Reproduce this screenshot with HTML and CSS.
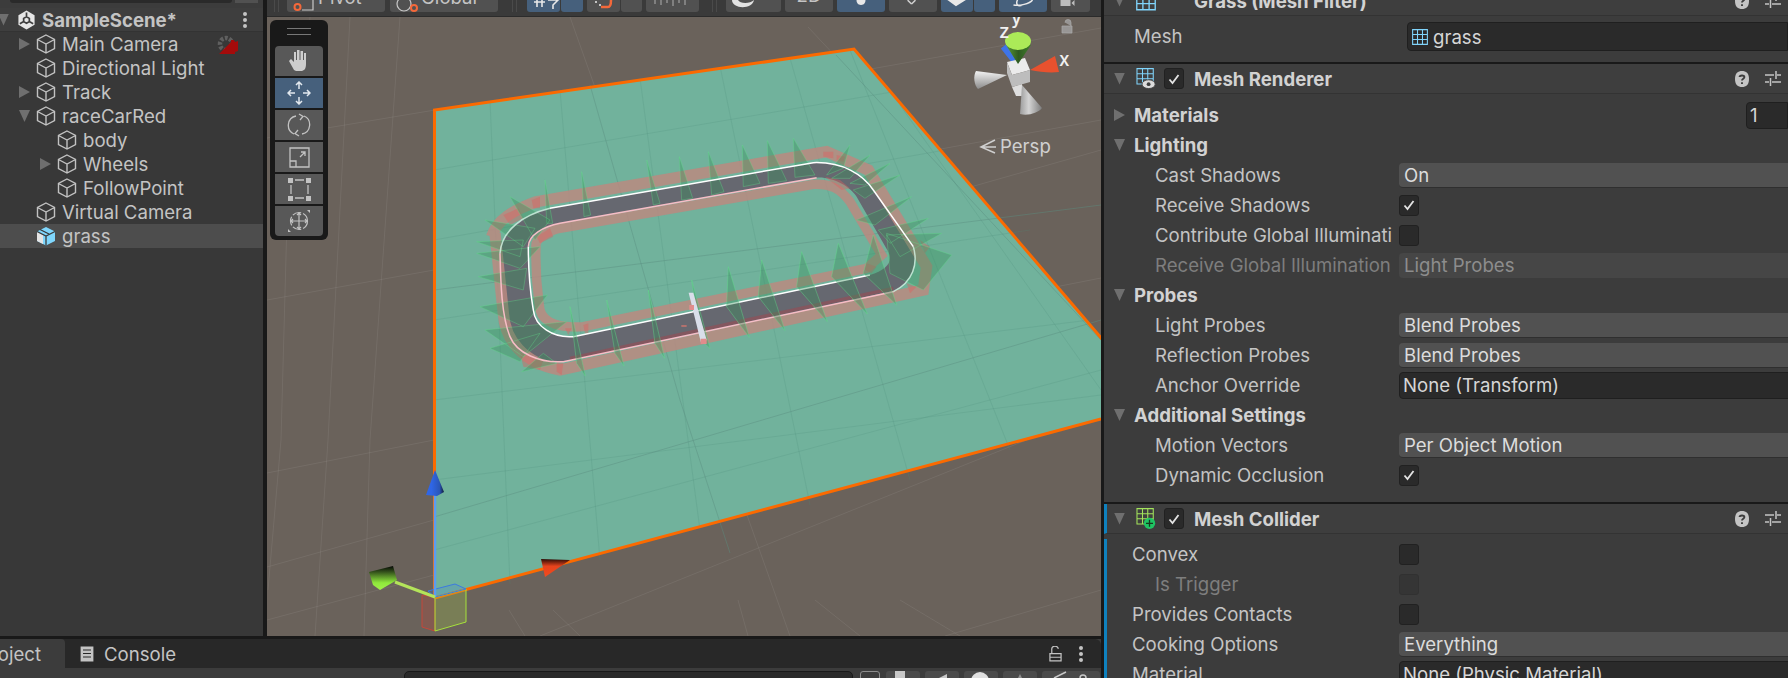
FILE: index.html
```html
<!DOCTYPE html>
<html lang="en">

<head>
    <meta charset="UTF-8">
    <title>SampleScene - Unity</title>
    <link rel="stylesheet" href="styles.css">
</head>

<body>
    <svg class="defs" width="0" height="0">
        <symbol id="cube" viewBox="0 0 20 20">
            <path d="M10 1 18.5 5.5V14.5L10 19 1.5 14.5V5.5ZM1.5 5.5 10 10 18.5 5.5M10 10V19" fill="none" stroke="#c2c2c2" stroke-width="1.4" />
        </symbol>
        <symbol id="prefab" viewBox="0 0 20 20">
            <path d="M10 1 19 5.5V15L10 19.5 1 15V5.5Z" fill="#7fd6fc" />
            <path d="M1 6 7 9V18L1 15Z" fill="#e4e4e4" />
            <path d="M10 10V19.5M4 3.5 13 8M1 5.5 10 10 19 5.5" fill="none" stroke="#3a3a3a" stroke-width="1.3" />
        </symbol>
        <symbol id="help" viewBox="0 0 14 16">
            <path d="M7 0C11 0 14 2 14 8S11 16 7 16 0 14 0 8 3 0 7 0Z" fill="#c4c4c4" />
            <path d="M4.6 6C4.6 4.2 9.4 3.8 9.4 6 9.4 7.8 7 7.6 7 9.6M7 11.2V13" fill="none" stroke="#3c3c3c" stroke-width="1.9" />
        </symbol>
        <symbol id="sliders" viewBox="0 0 16 18">
            <path d="M0 5H9M12 5H16M11 1V9M0 12H4M7 12H16M5.5 8V16" fill="none" stroke="#c4c4c4" stroke-width="1.5" />
        </symbol>
        <symbol id="meshgrid" viewBox="0 0 18 18">
            <path d="M.7.7H17.3V17.3H.7ZM6.2.7V17.3M11.8.7V17.3M.7 6.2H17.3M.7 11.8H17.3" fill="none" stroke="#80d4fb" stroke-width="1.2" />
        </symbol>
        <symbol id="check" viewBox="0 0 12 12">
            <path d="M1.5 6.5 4.5 10 10.5 2" fill="none" stroke="#e4e4e4" stroke-width="1.8" />
        </symbol>
    </svg>

    <div class="editor">
        <div class="workspace">
            <div class="top-area">
                <!-- hierarchy -->
                <div class="hierarchy">
                    <div class="search-strip">
                        <div class="search-field"></div>
                        <div class="search-btn"></div>
                    </div>
                    <div class="scene-row">
                        <span class="tri tri-down tri-clip"></span>
                        <svg class="unity-logo" viewBox="0 0 20 20">
                            <path d="M10 0 18.5 5V15L10 20 1.5 15V5Z" fill="#e6e6e6" />
                            <path d="M10 6.5 7 8.300V11.700L10 13.500 13 11.700V8.300ZM10 2V6.500M3 14 7 11.700M17 14 13 11.700" fill="none" stroke="#3e3e3e" stroke-width="1.800" />
                        </svg>
                        <span class="scene-name">SampleScene*</span>
                        <span class="kebab"></span>
                    </div>
                    <div class="node"><span class="tri tri-right"></span><svg class="node-icon"><use href="#cube" /></svg><span>Main Camera</span>
                        <svg class="cam-warning" viewBox="0 0 22 20">
                            <circle cx="9" cy="10" r="6" fill="none" stroke="#606060" stroke-width="4.500" stroke-dasharray="2.800 1.600" />
                            <path d="M2 20 14 8V6H17L18 8 21 7V17L18 18V20Z" fill="#a40b0b" />
                        </svg>
                    </div>
                    <div class="node"><span class="tri"></span><svg class="node-icon"><use href="#cube" /></svg><span>Directional Light</span></div>
                    <div class="node"><span class="tri tri-right"></span><svg class="node-icon"><use href="#cube" /></svg><span>Track</span></div>
                    <div class="node"><span class="tri tri-down"></span><svg class="node-icon"><use href="#cube" /></svg><span>raceCarRed</span></div>
                    <div class="node child"><span class="tri"></span><svg class="node-icon"><use href="#cube" /></svg><span>body</span></div>
                    <div class="node child"><span class="tri tri-right"></span><svg class="node-icon"><use href="#cube" /></svg><span>Wheels</span></div>
                    <div class="node child"><span class="tri"></span><svg class="node-icon"><use href="#cube" /></svg><span>FollowPoint</span></div>
                    <div class="node"><span class="tri"></span><svg class="node-icon"><use href="#cube" /></svg><span>Virtual Camera</span></div>
                    <div class="node selected"><span class="tri"></span><svg class="node-icon"><use href="#prefab" /></svg><span>grass</span></div>
                </div>

                <!-- scene view -->
                <div class="scene">
                    <div class="scene-toolbar">
                        <span class="grip-mark"></span>
                        <div class="tb-btn w-pivot">
                            <svg class="tb-icon pivot-icon" viewBox="0 0 22 24"><circle cx="4.500" cy="19" r="3" fill="none" stroke="#f4683a" stroke-width="2" /><path d="M9 22H20V12" fill="none" stroke="#c8c8c8" stroke-width="1.200" /></svg>
                            Pivot
                        </div>
                        <div class="tb-btn w-global">
                            <svg class="tb-icon global-icon" viewBox="0 0 24 24"><circle cx="8" cy="16" r="7" fill="none" stroke="#c8c8c8" stroke-width="1.200" /><circle cx="18" cy="20" r="3" fill="none" stroke="#f4683a" stroke-width="2" /></svg>
                            Global
                        </div>
                        <span class="grip-mark second"></span>
                        <div class="tb-btn blue w-snap"><svg class="tb-glyph" viewBox="0 0 33 12"><path d="M10 0V7M15 0V7M7 2H18M21 0H31L26 5V9" fill="none" stroke="#e8e8e8" stroke-width="1.600" /></svg></div>
                        <div class="tb-btn blue w-snap2 joined"></div>
                        <div class="tb-btn w-snap ml"><svg class="tb-glyph" viewBox="0 0 33 12"><path d="M8 2H10M12 5H14" stroke="#e8e8e8" stroke-width="1.600" /><path d="M14 7H21C23 7 24 5 24 0" fill="none" stroke="#f4683a" stroke-width="2.500" /></svg></div>
                        <div class="tb-btn w-small joined"></div>
                        <div class="tb-btn w-ruler ml"><svg class="tb-glyph" viewBox="0 0 53 12"><path d="M9 0V4M15 0V5M21 0V3M27 0V6M33 0V3M39 0V5" stroke="#b0b0b0" /></svg></div>
                        <span class="grip-mark third"></span>
                        <div class="tb-btn w-shade"><svg class="tb-glyph" viewBox="0 0 55 12"><path d="M6 0C6 9 26 10 28 0 24 4 14 4 12 0Z" fill="#e2e2e2" /></svg></div>
                        <div class="tb-btn w-2d ml label-short">2D</div>
                        <div class="tb-btn blue w-light ml"><svg class="tb-glyph" viewBox="0 0 47 12"><path d="M19 0H28C28 2 27 5 23.500 5 20 5 19 2 19 0Z" fill="#e8e8e8" /></svg></div>
                        <div class="tb-btn w-audio ml"><svg class="tb-glyph" viewBox="0 0 49 12"><path d="M19 0 23 4M27 0 23 4" stroke="#cfcfcf" stroke-width="1.500" /></svg></div>
                        <div class="tb-btn blue w-fx ml"><svg class="tb-glyph" viewBox="0 0 32 12"><path d="M8 0 15 5 23 0Z" fill="#e8e8e8" stroke="#e8e8e8" stroke-width="2" /></svg></div>
                        <div class="tb-btn blue w-small joined"></div>
                        <div class="tb-btn blue w-light ml"><svg class="tb-glyph" viewBox="0 0 47 12"><path d="M14 5C20 6 30 4 33 0M18 0C16 4 18 7 23 5" fill="none" stroke="#e8e8e8" stroke-width="1.500" /></svg></div>
                        <div class="tb-btn w-cam ml"><svg class="tb-glyph" viewBox="0 0 38 12"><path d="M9 0H19V6H9ZM20 3 23 0V6Z" fill="#bdbdbd" /></svg></div>
                    </div>

                    <svg class="viewport" viewBox="267 17 834 619">
                        <defs>
                            <linearGradient id="cone-blue" x1="0" x2="1" y1="0" y2="0"><stop offset=".3" stop-color="#2f66e6" /><stop offset=".75" stop-color="#2a56b8" /><stop offset="1" stop-color="#101c3a" /></linearGradient>
                            <linearGradient id="cone-green" x1="0" x2="0" y1="0" y2="1"><stop offset="0" stop-color="#050805" /><stop offset=".25" stop-color="#34521c" /><stop offset=".7" stop-color="#8fe83c" /><stop offset="1" stop-color="#a2f04a" /></linearGradient>
                            <linearGradient id="cone-red" x1="0" x2="0" y1="0" y2="1"><stop offset="0" stop-color="#2a0c06" /><stop offset=".4" stop-color="#e8431c" /><stop offset="1" stop-color="#ef4b1f" /></linearGradient>
                            <linearGradient id="cone-green-dark" x1="0" x2="1" y1="0" y2="0"><stop offset="0" stop-color="#5a9a35" /><stop offset=".5" stop-color="#2f5a22" /><stop offset="1" stop-color="#3f7f2b" /></linearGradient>
                            <linearGradient id="cone-grey" x1="0" x2="0" y1="0" y2="1"><stop offset="0" stop-color="#f2f2f2" /><stop offset="1" stop-color="#8b8b8b" /></linearGradient>
                            <linearGradient id="cone-grey2" x1="0" x2="1" y1="0" y2="0"><stop offset="0" stop-color="#9d9d9d" /><stop offset=".4" stop-color="#d4d4d4" /><stop offset="1" stop-color="#7c7c7c" /></linearGradient>
                        </defs>
                        <rect x="267" y="17" width="834" height="619" fill="#6a625b" />
                        <g stroke="#ffffff" stroke-opacity=".07" fill="none">
                            <path d="M570 17 790 636M808 27 1101 340M267 138 435 110M854 72 1101 28M1101 150 960 190" />
                            <path d="M281 440 268 590M328 440 315 636M370 440 364 636M509 610 525 636M553 610 580 636M738 600 748 636M815 600 860 636M900 600 960 636" />
                            <path d="M267 473 434 440M267 567 434 520M267 620 434 575M540 636 1101 410M945 636 1101 590M880 160 1101 120" />
                            <path d="M310 17 300 110M267 300 434 270M290 110 281 440M350 17 328 440M400 17 370 440M1040 290 1101 278" />
                        </g>
                        <polygon points="434.500,110 854,49 1101,338 1101,419 434.500,598" fill="#71b29c" />
                        <g stroke="#4f8d7a" stroke-opacity=".22" fill="none">
                            <path d="M434 170 892 92M434 240 945 150M434 320 1030 230M434 400 1090 320M434 480 1101 395M434 550 1101 370" />
                            <path d="M490 100 510 584M560 90 600 560M640 78 700 530M720 66 810 505M790 58 910 480M850 50 1010 450M900 105 1101 390" />
                        </g>
                        <path d="M590 85 680 400 730 553M836 55 1101 340M434 290 1101 205M434 517 1101 320" stroke="#5a8d80" stroke-opacity=".45" fill="none" />

                        <!-- track, drawn in its own zoomed coordinates -->
                        <g transform="translate(460 140) scale(.3333)">
                            <path fill="#666870" fill-rule="evenodd" d="M120 340C125 270 190 225 270 205L1060 68C1150 65 1210 105 1240 150L1360 320C1375 370 1360 425 1300 455L310 665C240 670 170 640 150 590 130 530 125 430 120 340ZM205 320C205 430 215 480 220 510 225 560 280 595 340 590L1230 405C1280 390 1300 365 1285 335L1190 170C1170 140 1120 110 1070 113L300 250C250 260 205 285 205 320Z" />
                            <path fill="none" stroke="#ba8a80" stroke-opacity=".85" stroke-width="34" d="M105 280 130 520C135 600 190 670 300 690L1390 450 1400 380 1225 90 1100 35 230 185C160 210 110 240 95 290" />
                            <path fill="none" stroke="#ba8a80" stroke-opacity=".85" stroke-width="28" d="M228 320C225 420 235 470 240 510 250 550 300 565 370 560L1220 385 1265 345 1170 185C1140 145 1110 130 1060 133L300 265C260 275 225 295 228 320Z" />
                            <path fill="none" stroke="#a9434b" stroke-opacity=".45" stroke-width="10" d="M330 655 1300 445" />
                            <g fill="#e25c5c" fill-opacity=".4">
                                <path d="M130 225 175 205 190 235 150 255ZM215 180 240 170 240 205 220 205ZM230 290 270 265 280 290 240 310ZM1090 35 1120 35 1120 55 1090 50ZM1130 45 1155 50 1150 65 1130 60ZM1095 110 1140 120 1170 145 1145 150ZM1220 370 1250 380 1235 400 1215 390ZM1380 300 1410 320 1395 340ZM1340 430 1370 440 1350 460ZM180 640 250 660 240 690 190 680ZM290 665 310 670 305 705 290 695ZM370 555 385 550 385 580 375 580ZM315 565 335 565 325 585Z" />
                            </g>
                            <g fill="#38915b" fill-opacity=".38" stroke="#62e08a" stroke-opacity=".5" stroke-width="2">
                                <path d="M255 120 278 250 260 250ZM365 95 392 225 372 230ZM560 60 600 190 580 195ZM658 50 698 175 665 180ZM745 35 792 155 755 165ZM847 15 900 130 850 140ZM922 2 980 122 925 130ZM1000 -5 1065 105 1005 112Z" />
                                <path d="M150 170 270 240 225 300ZM75 240 225 265 190 320ZM50 305 190 300 180 350ZM50 340 240 320 180 385ZM55 410 200 385 190 450ZM60 500 262 465 190 560ZM75 570 320 545 190 650ZM90 625 240 580 180 665ZM185 695 250 640 290 670Z" />
                                <path d="M1170 15 1100 105 1150 85ZM1230 45 1115 115 1170 115ZM1290 70 1170 130 1215 135ZM1320 105 1180 150 1215 175ZM1355 170 1190 240 1245 255ZM1405 235 1255 270 1290 310ZM1445 280 1280 285 1320 350ZM1475 345 1280 280 1290 400 1390 450Z" />
                            </g>
                            <path fill="none" stroke="#ffffff" stroke-width="4.500" d="M270 205 1060 68C1150 65 1210 105 1240 150L1360 320" />
                            <path fill="none" stroke="#f7bdc6" stroke-width="4.500" d="M120 340C122 430 125 530 150 590 170 640 240 670 310 665L1300 455" />
                            <path fill="none" stroke="#d6f5e6" stroke-opacity=".8" stroke-width="4.500" d="M1360 320C1375 370 1360 425 1300 455M120 340C125 270 190 225 270 205" />
                            <path fill="none" stroke="#f7bdc6" stroke-width="4.500" d="M1070 113 300 250C250 260 205 285 205 320" />
                            <path fill="none" stroke="#ffffff" stroke-width="4.500" d="M205 320C205 430 215 480 220 510 225 560 280 595 340 590L1230 405" />
                            <g fill="#38915b" fill-opacity=".38" stroke="#62e08a" stroke-opacity=".6" stroke-width="2">
                                <path d="M330 500 376 708 350 670ZM440 480 492 678 465 640ZM565 450 614 655 585 610ZM695 420 750 625 722 600ZM805 380 868 592 800 500ZM905 360 975 572 895 470ZM1025 335 1102 545 1010 440ZM1135 310 1222 522 1115 410ZM1240 285 1310 495 1210 400Z" />
                            </g>
                            <path d="M686 458 700 458 740 600 724 612Z" fill="#d9deea" />
                            <path d="M688 495 702 495 702 510 688 510ZM722 596 740 596 740 612 722 612Z" fill="#e18c8c" />
                            <path d="M664 556 680 556 680 560 664 560Z" fill="#d8776f" />
                        </g>

                        <!-- selection outline -->
                        <path d="M434.500 598V110L854 49 1102 339M434.500 598 1101 419" fill="none" stroke="#fb6a00" stroke-width="3" />

                        <!-- move handles -->
                        <path d="M435 597 422 595V627L435 631Z" fill="#c5473a" fill-opacity=".28" stroke="#c5473a" />
                        <path d="M435 597 466 589V622L435 631Z" fill="#a3c94a" fill-opacity=".28" stroke="#a6e23b" />
                        <path d="M435 597 428 591 455 584 466 589Z" fill="#3c7ae0" fill-opacity=".2" stroke="#3c7ae0" />
                        <path d="M435 494V597" stroke="#5b9cf2" stroke-width="2.500" />
                        <path d="M395 582 435 597" stroke="#b4e45a" stroke-width="3" />
                        <path d="M435 470 444 492 437 496 426 495Z" fill="url(#cone-blue)" />
                        <path d="M369 572 393 566 397 580 380 590 373 585Z" fill="url(#cone-green)" />
                        <path d="M570 560 541 559 545 577Z" fill="url(#cone-red)" />

                        <!-- orientation gizmo -->
                        <g>
                            <path d="M1007 75 976 71C973 76 974 85 978 89Z" fill="url(#cone-grey)" />
                            <path d="M1012 87 1022 84 1022 96 1016 96Z" fill="#dedede" />
                            <path d="M1022 85 1020 114C1028 116 1038 113 1042 108Z" fill="url(#cone-grey2)" />
                            <path d="M1004 46 1015 60" stroke="#3e74e8" stroke-width="8" />
                            <path d="M1007 62 1025 58 1030 70 1012 75Z" fill="#ebebeb" />
                            <path d="M1007 62 1012 75 1030 70V82L1012 87 1007 73Z" fill="#bdbdbd" />
                            <path d="M1030 70 1055 56 1059 72C1050 73 1040 72 1030 70Z" fill="#e8512e" />
                            <path d="M1006 45 1031 45 1018 64Z" fill="url(#cone-green-dark)" />
                            <ellipse cx="1018" cy="41" rx="13" ry="9" fill="#abea58" />
                            <text class="gizmo-label" x="1011" y="24">y</text>
                            <text class="gizmo-label" x="999" y="38">z</text>
                            <text class="gizmo-label" x="1059" y="66">x</text>
                            <path d="M1071 26V22.500A3 3 0 0 0 1065 22.500M1062 26H1072V33H1062Z" fill="#a8a8a8" fill-opacity=".75" stroke="#a8a8a8" stroke-opacity=".75" />
                            <path d="M995 140 981 147 995 153M981 147H996" fill="none" stroke="#cfcfcf" stroke-width="1.500" />
                            <text class="persp-label" x="1000" y="153">Persp</text>
                        </g>
                    </svg>

                    <!-- tool palette -->
                    <div class="palette">
                        <div class="grip"></div>
                        <div class="tool"><svg viewBox="0 0 24 24"><path d="M7 21 2 12 4 10 7 13V3H9V11H10V1H12.500V11H13.500V2H16V11H17V4H19V15C19 20 17 22 14 22H9Z" fill="#cdcdcd" /></svg></div>
                        <div class="tool active"><svg viewBox="0 0 24 24"><path d="M12 1V8M12 16V23M1 12H8M16 12H23M9 4 12 1 15 4M9 20 12 23 15 20M4 9 1 12 4 15M20 9 23 12 20 15" fill="none" stroke="#e2e8ee" stroke-width="1.500" /></svg></div>
                        <div class="tool"><svg viewBox="0 0 24 24"><path d="M7 21A9.500 9.500 0 0 1 9 3M17 3A9.500 9.500 0 0 1 15 21M12 1 16 3.500 13 7M12 23 8 20.500 11 17" fill="none" stroke="#c2c2c2" stroke-width="1.300" /></svg></div>
                        <div class="tool"><svg viewBox="0 0 24 24"><path d="M3 16V3H22V22H9V16H3V22H9M13 12 18 7M14 7H18V11" fill="none" stroke="#c2c2c2" stroke-width="1.300" /></svg></div>
                        <div class="tool"><svg viewBox="0 0 24 24"><path d="M8 3H17M8 21H17M4 8V17M21 8V17" fill="none" stroke="#c2c2c2" stroke-width="1.300" /><path d="M1 1H6V6H1ZM19 1H24V6H19ZM1 19H6V24H1ZM19 19H24V24H19Z" fill="#c2c2c2" /></svg></div>
                        <div class="tool"><svg viewBox="0 0 24 24"><circle cx="12" cy="12" r="8.500" fill="none" stroke="#c2c2c2" stroke-width="1.200" stroke-dasharray="9 2" /><path d="M12 4V20M4 12H20M10 6 12 4 14 6M10 18 12 20 14 18M6 10 4 12 6 14M18 10 20 12 18 14" fill="none" stroke="#c2c2c2" stroke-width="1.200" /><path d="M20 1H23V4ZM1 20 4 23H1Z" fill="#c2c2c2" /></svg></div>
                    </div>
                </div>
            </div>

            <!-- project / console -->
            <div class="bottom-panel">
                <div class="tabs">
                    <div class="tab active"><span class="tab-clip">Project</span></div>
                    <div class="tab">
                        <svg class="tab-icon" viewBox="0 0 14 16"><path d="M0 0H14V16H0ZM3 4H11M3 7.500H11M3 11H11" fill="#c4c4c4" stroke="#282828" stroke-width="1.200" /></svg>
                        Console
                    </div>
                    <div class="tab-spacer"></div>
                    <svg class="lock" viewBox="0 0 14 17"><path d="M3 8V4A3.500 3.500 0 0 1 10 3M1 8H13V16H1ZM1 12H13" fill="none" stroke="#c4c4c4" stroke-width="1.300" /></svg>
                    <span class="kebab small"></span>
                </div>
                <div class="project-bar">
                    <div class="project-search"></div>
                    <div class="pb-box"></div>
                    <div class="pb-btn w34"><svg viewBox="0 0 34 7"><path d="M9 0H19V7H9Z" fill="#c8c8c8" /></svg></div>
                    <div class="pb-btn w34"><svg viewBox="0 0 34 7"><path d="M14 7 22 3V7Z" fill="#c8c8c8" /></svg></div>
                    <div class="pb-btn w34"><svg viewBox="0 0 34 7"><circle cx="16" cy="10" r="9" fill="#e0e0e0" /></svg></div>
                    <div class="pb-btn w34"><svg viewBox="0 0 34 7"><path d="M17 3 19 7H15Z" fill="#909090" /></svg></div>
                    <div class="pb-btn wide"><svg viewBox="0 0 58 7"><path d="M12 7 24 1M38 7C38 3 44 3 44 7" fill="none" stroke="#c8c8c8" stroke-width="1.500" /></svg></div>
                </div>
            </div>
        </div>

        <!-- inspector -->
        <div class="inspector">
            <div class="comp-header first">
                <span class="tri tri-down"></span>
                <svg class="comp-icon"><use href="#meshgrid" /></svg>
                <span class="comp-title no-check">Grass (Mesh Filter)</span>
                <svg class="hdr-help"><use href="#help" /></svg>
                <svg class="hdr-sliders"><use href="#sliders" /></svg>
            </div>
            <div class="mesh-row">
                <span class="prop-label top">Mesh</span>
                <div class="object-field mesh-field"><svg class="field-icon"><use href="#meshgrid" /></svg>grass</div>
            </div>

            <div class="separator"></div>
            <div class="comp-header">
                <span class="tri tri-down"></span>
                <svg class="comp-icon" viewBox="0 0 22 24">
                    <path d="M.7.7H19.300V18.300H.7ZM7 .7V18.300M13 .7V18.300M.7 6.500H19.300M.7 12.300H19.300" fill="none" stroke="#80d4fb" stroke-width="1.200" />
                    <ellipse cx="14" cy="18.500" rx="7.500" ry="5" fill="#dcdcdc" stroke="#3e3e3e" />
                    <circle cx="14" cy="18.500" r="2.200" fill="#3e3e3e" />
                </svg>
                <span class="checkbox"><svg><use href="#check" /></svg></span>
                <span class="comp-title">Mesh Renderer</span>
                <svg class="hdr-help"><use href="#help" /></svg>
                <svg class="hdr-sliders"><use href="#sliders" /></svg>
            </div>
            <div class="comp-body">
                <div class="row"><span class="tri tri-right section-tri"></span><span class="prop-label top bold">Materials</span><div class="object-field count-field">1</div></div>
                <div class="row"><span class="tri tri-down section-tri"></span><span class="prop-label top bold">Lighting</span></div>
                <div class="row"><span class="prop-label sub">Cast Shadows</span><div class="dropdown">On</div></div>
                <div class="row"><span class="prop-label sub">Receive Shadows</span><span class="checkbox"><svg><use href="#check" /></svg></span></div>
                <div class="row"><span class="prop-label sub">Contribute Global Illuminati</span><span class="checkbox"></span></div>
                <div class="row"><span class="prop-label sub disabled">Receive Global Illumination</span><div class="dropdown off">Light Probes</div></div>
                <div class="row"><span class="tri tri-down section-tri"></span><span class="prop-label top bold">Probes</span></div>
                <div class="row"><span class="prop-label sub">Light Probes</span><div class="dropdown">Blend Probes</div></div>
                <div class="row"><span class="prop-label sub">Reflection Probes</span><div class="dropdown">Blend Probes</div></div>
                <div class="row"><span class="prop-label sub">Anchor Override</span><div class="object-field">None (Transform)</div></div>
                <div class="row"><span class="tri tri-down section-tri"></span><span class="prop-label top bold">Additional Settings</span></div>
                <div class="row"><span class="prop-label sub">Motion Vectors</span><div class="dropdown">Per Object Motion</div></div>
                <div class="row"><span class="prop-label sub">Dynamic Occlusion</span><span class="checkbox"><svg><use href="#check" /></svg></span></div>
            </div>

            <div class="separator"></div>
            <div class="comp-header changed">
                <span class="tri tri-down"></span>
                <svg class="comp-icon" viewBox="0 0 22 24">
                    <path d="M.7.7H19.300V18.300H.7ZM7 .7V18.300M13 .7V18.300M.7 6.500H19.300M.7 12.300H19.300" fill="none" stroke="#a3e45c" stroke-width="1.200" />
                    <circle cx="15" cy="17.500" r="6.500" fill="#1fc463" />
                    <path d="M15 13.500V21.500M11 17.500H19" stroke="#17391f" stroke-width="1.500" />
                </svg>
                <span class="checkbox"><svg><use href="#check" /></svg></span>
                <span class="comp-title">Mesh Collider</span>
                <svg class="hdr-help"><use href="#help" /></svg>
                <svg class="hdr-sliders"><use href="#sliders" /></svg>
            </div>
            <div class="comp-body changed">
                <div class="row"><span class="prop-label coll">Convex</span><span class="checkbox"></span></div>
                <div class="row"><span class="prop-label sub-coll disabled">Is Trigger</span><span class="checkbox off"></span></div>
                <div class="row"><span class="prop-label coll">Provides Contacts</span><span class="checkbox"></span></div>
                <div class="row"><span class="prop-label coll">Cooking Options</span><div class="dropdown">Everything</div></div>
                <div class="row"><span class="prop-label coll">Material</span><div class="object-field">None (Physic Material)</div></div>
            </div>
        </div>
    </div>
</body>

</html>
```

FILE: styles.css
```css
* {
    box-sizing: border-box;
}

html,
body {
    margin: 0;
    height: 100%;
    overflow: hidden;
}

body {
    font-family: Inter, "Noto Sans", sans-serif;
    font-size: 18.6px;
    color: #c4c4c4;
    background: #191919;
}

.defs {
    position: absolute;
}

.editor {
    display: flex;
    width: 1788px;
    height: 678px;
}

.workspace {
    width: 1101px;
    display: flex;
    flex-direction: column;
    flex: none;
}

.top-area {
    display: flex;
    height: 636px;
    flex: none;
}

/* hierarchy */
.hierarchy {
    width: 263px;
    flex: none;
    background: #383838;
}

.search-strip {
    display: flex;
    gap: 3px;
    height: 8px;
    padding-left: 10px;
    background: #3c3c3c;
}

.search-field {
    width: 222px;
    height: 3px;
    background: #2a2a2a;
    border-radius: 0 0 4px 4px;
}

.search-btn {
    width: 23px;
    height: 3px;
    background: #515151;
}

.scene-row {
    display: flex;
    align-items: center;
    height: 24px;
    background: #3e3e3e;
    border-bottom: 1px solid #333;
    font-weight: 700;
}

.scene-name {
    margin-left: 6px;
}

.unity-logo {
    width: 19px;
    height: 20px;
    margin-left: 8px;
}

.node {
    display: flex;
    align-items: center;
    height: 24px;
    padding-left: 19px;
    position: relative;
}

.node.child {
    padding-left: 40px;
}

.node.selected {
    background: #4d4d4d;
}

.node-icon {
    width: 20px;
    height: 20px;
    margin: 0 6px 0 6px;
}

.tri {
    display: inline-block;
    width: 11px;
    height: 12px;
    flex: none;
}

.tri-right {
    background: #6f6f6f;
    clip-path: polygon(0 0, 100% 50%, 0 100%);
}

.tri-down {
    background: #6f6f6f;
    clip-path: polygon(0 0, 100% 0, 50% 100%);
}

.tri-clip {
    margin-left: -2px;
}

.kebab {
    margin-left: auto;
    margin-right: 16px;
    width: 4px;
    height: 4px;
    border-radius: 50%;
    background: #c4c4c4;
    box-shadow: 0 -6px 0 #c4c4c4, 0 6px 0 #c4c4c4;
}

.cam-warning {
    position: absolute;
    left: 217px;
    top: 2px;
    width: 22px;
    height: 20px;
}

/* scene view */
.scene {
    flex: 1;
    position: relative;
    display: flex;
    flex-direction: column;
    border-left: 4px solid #191919;
    min-width: 0;
}

.scene-toolbar {
    display: flex;
    height: 17px;
    flex: none;
    padding-left: 20px;
    background: #3a3a3a;
    border-bottom: 1px solid #2b2b2b;
    overflow: hidden;
}

.tb-btn {
    position: relative;
    display: flex;
    align-items: center;
    margin-top: -12px;
    height: 24px;
    line-height: 18px;
    padding-bottom: 6px;
    background: #515151;
    border-radius: 0 0 3px 3px;
    flex: none;
    overflow: hidden;
}

.tb-btn.blue {
    background: #46607c;
}

.tb-icon {
    position: absolute;
    left: 6px;
    top: 0;
    width: 24px;
    height: 24px;
}

.pivot-icon {
    width: 22px;
}

.tb-glyph {
    position: absolute;
    left: 0;
    bottom: 0;
    width: 100%;
    height: 12px;
}

.grip-mark {
    width: 5px;
    height: 12px;
    flex: none;
    border-left: 1px solid #4a4a4a;
    border-right: 1px solid #4a4a4a;
    margin-left: -13px;
    margin-right: 8px;
}

.grip-mark.second {
    margin: 0 10px 0 14px;
}

.grip-mark.third {
    margin: 0 9px 0 13px;
}

.w-pivot {
    width: 98px;
    margin-right: 5px;
    padding-left: 31px;
}

.w-global {
    width: 108px;
    padding-left: 31px;
}

.w-snap {
    width: 33px;
}

.w-snap2 {
    width: 22px;
}

.w-small {
    width: 21px;
}

.w-ruler {
    width: 53px;
}

.w-shade {
    width: 55px;
}

.w-2d {
    width: 48px;
    justify-content: center;
}

.label-short {
    line-height: 12px;
    padding-bottom: 10px;
}

.w-light {
    width: 48px;
}

.w-audio {
    width: 48px;
}

.w-fx {
    width: 32px;
}

.w-cam {
    width: 39px;
}

.joined {
    margin-left: 1px;
}

.ml {
    margin-left: 4px;
}

.viewport {
    display: block;
    flex: 1;
    width: 100%;
    min-height: 0;
}

.gizmo-label {
    font: 500 19px Inter, sans-serif;
    fill: #f0f0f0;
}

.persp-label {
    font: 18.6px Inter, sans-serif;
    fill: #d0d0d0;
}

.palette {
    position: absolute;
    left: 3px;
    top: 20px;
    width: 58px;
    height: 220px;
    padding: 26px 5px 0;
    background: #191919;
    border-radius: 6px;
}

.grip {
    position: absolute;
    left: 17px;
    top: 8px;
    width: 24px;
    height: 7px;
    border-top: 1px solid #777;
    border-bottom: 1px solid #777;
}

.tool {
    display: flex;
    align-items: center;
    justify-content: center;
    height: 30px;
    margin-bottom: 2px;
    background: #585858;
}

.tool:nth-child(2) {
    border-radius: 4px 4px 0 0;
}

.tool:last-child {
    border-radius: 0 0 4px 4px;
}

.tool.active {
    background: #46607c;
}

.tool svg {
    width: 24px;
    height: 24px;
}

/* bottom panel */
.bottom-panel {
    flex: 1;
    border-top: 3px solid #191919;
    background: #3c3c3c;
}

.tabs {
    display: flex;
    align-items: center;
    height: 29px;
    background: #282828;
    border-radius: 0 6px 0 0;
}

.tab {
    display: flex;
    align-items: center;
    height: 100%;
    padding-left: 15px;
}

.tab.active {
    width: 65px;
    padding: 0;
    background: #3c3c3c;
    border-radius: 0 4px 0 0;
    overflow: hidden;
    justify-content: flex-end;
}

.tab-clip {
    margin-right: 24px;
    flex: none;
}

.tab-icon {
    width: 14px;
    height: 16px;
    margin-right: 10px;
}

.tab-spacer {
    flex: 1;
}

.lock {
    width: 13px;
    height: 16px;
    margin-right: 17px;
}

.kebab.small {
    margin: 0 18px 0 0;
}

.project-bar {
    display: flex;
    height: 10px;
    padding: 3px 0 0 404px;
    overflow: hidden;
}

.project-search {
    width: 449px;
    height: 20px;
    margin-right: 7px;
    background: #2a2a2a;
    border: 1px solid #191919;
    border-radius: 5px;
}

.pb-box {
    width: 20px;
    height: 14px;
    margin-right: 6px;
    border: 1px solid #8c8c8c;
    border-radius: 3px;
}

.pb-btn {
    height: 20px;
    margin-right: 5px;
    background: #4b4b4b;
    border-radius: 3px;
}

.pb-btn svg {
    display: block;
    width: 100%;
    height: 7px;
}

.w34 {
    width: 34px;
}

.pb-btn.wide {
    width: 58px;
    margin-right: 0;
}

/* inspector */
.inspector {
    flex: 1;
    min-width: 0;
    overflow: hidden;
    background: #3c3c3c;
    border-left: 3px solid #191919;
}

.comp-header {
    position: relative;
    display: flex;
    align-items: center;
    height: 30px;
    padding-left: 10px;
    background: #3e3e3e;
    border-bottom: 1px solid #333;
    color: #d2d2d2;
}

.comp-header.first {
    margin-top: -14px;
}

.comp-header.changed,
.comp-body.changed {
    border-left: 3px solid #0f81be;
}

.comp-header.changed {
    padding-left: 7px;
}

.comp-icon {
    width: 20px;
    height: 21px;
    margin: 0 8px 0 11px;
    flex: none;
}

.comp-title {
    font-weight: 700;
    margin-left: 10px;
}

.comp-title.no-check {
    margin-left: 30px;
}

.hdr-help {
    position: absolute;
    right: 39px;
    top: 7px;
    width: 14px;
    height: 16px;
}

.hdr-sliders {
    position: absolute;
    right: 7px;
    top: 6px;
    width: 16px;
    height: 18px;
}

.mesh-row {
    position: relative;
    display: flex;
    align-items: flex-start;
    height: 46px;
    padding-top: 6px;
}

.separator {
    height: 2px;
    background: #191919;
}

.comp-body {
    padding: 6px 0 12px;
}

.comp-body.changed {
    margin-top: 5px;
    padding: 0;
}

.row {
    position: relative;
    display: flex;
    align-items: center;
    height: 30px;
}

.prop-label {
    flex: none;
    width: 295px;
    white-space: nowrap;
    overflow: hidden;
}

.prop-label.top {
    padding-left: 30px;
}

.mesh-row .prop-label {
    line-height: 29px;
}

.prop-label.bold {
    font-weight: 700;
    color: #d2d2d2;
}

.section-tri {
    position: absolute;
    left: 10px;
    top: 9px;
}

.prop-label.sub {
    padding-left: 51px;
}

.prop-label.coll {
    padding-left: 25px;
    width: 292px;
}

.prop-label.sub-coll {
    padding-left: 48px;
    width: 292px;
}

.disabled {
    color: #7e7e7e;
}

.dropdown,
.object-field {
    flex: 1;
    margin-right: -10px;
    white-space: nowrap;
    display: flex;
    align-items: center;
}

.dropdown {
    height: 25px;
    padding-left: 5px;
    background: #515151;
    border-radius: 4px 0 0 4px;
    border-bottom: 1px solid #2f2f2f;
    color: #dcdcdc;
}

.dropdown.off {
    background: #464646;
    border-bottom: 0;
    color: #8d8d8d;
}

.object-field {
    height: 27px;
    padding-left: 3px;
    background: #2a2a2a;
    border: 1px solid #1f1f1f;
    border-radius: 4px 0 0 4px;
    color: #d6d6d6;
}

.count-field {
    position: absolute;
    left: 642px;
    right: 0;
    margin: 0;
}

.mesh-field {
    position: absolute;
    left: 303px;
    right: 0;
    margin: 0;
    height: 29px;
    padding-left: 4px;
}

.field-icon {
    width: 16px;
    height: 16px;
    margin-right: 5px;
}

.checkbox {
    display: flex;
    align-items: center;
    justify-content: center;
    width: 20px;
    height: 21px;
    background: #2a2a2a;
    border: 1px solid #212121;
    border-radius: 3px;
    flex: none;
}

.checkbox.off {
    background: #353535;
    border-color: #313131;
}

.checkbox svg {
    width: 12px;
    height: 12px;
}
```
